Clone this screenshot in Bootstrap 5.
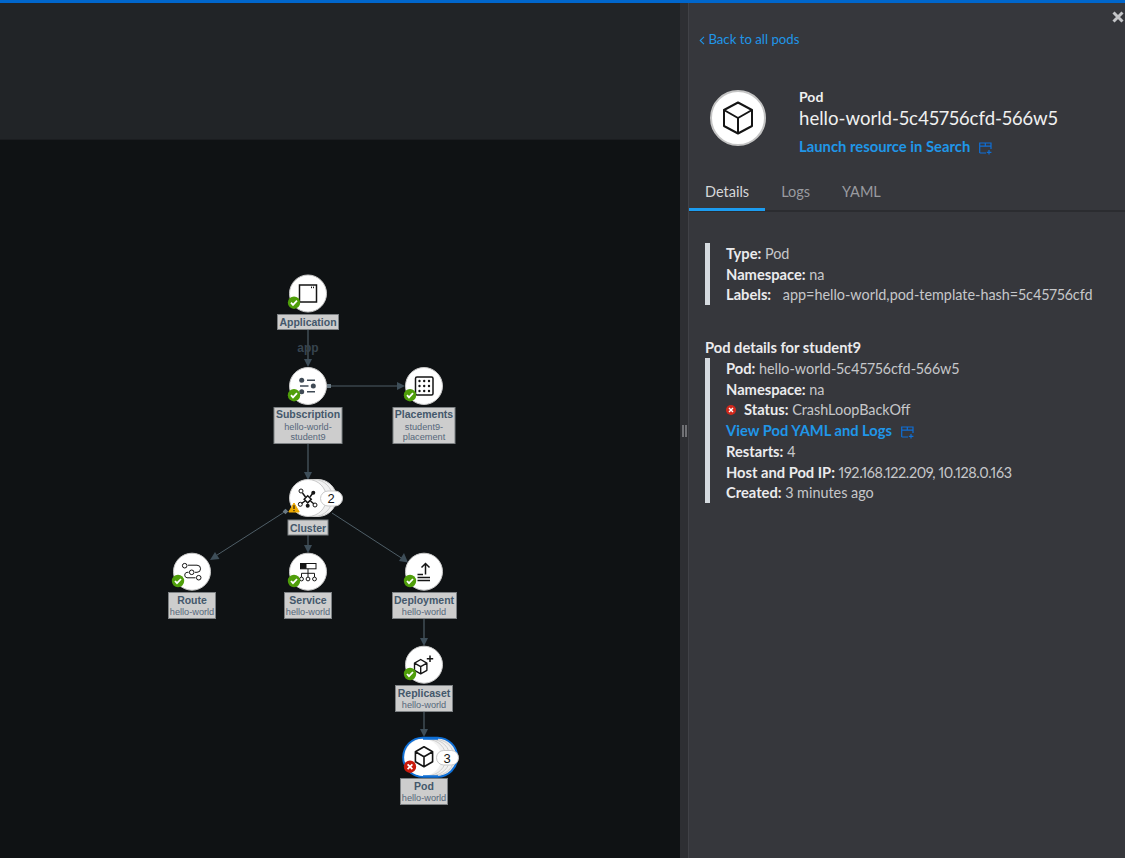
<!DOCTYPE html>
<html lang="en">
  <head>
    <meta charset="UTF-8" />
    <meta name="viewport" content="width=device-width, initial-scale=1.0" />
    <title>Pod details</title>
    <link href="https://cdn.jsdelivr.net/npm/bootstrap@5.3.3/dist/css/bootstrap.min.css" rel="stylesheet" />
    <style>
      html, body { height: 100%; }
      body {
        background-color: #0f1214;
        color: #e4e5e7;
        font-family: "Lato", sans-serif;
        font-size: 14px;
        font-variant-numeric: proportional-nums;
        overflow: hidden;
      }
      .top-strip { height: 3px; background-color: #0066cc; }
      .page-body { height: 855px; }
      .left-side { width: 680px; }
      .left-head { height: 137px; background-color: #212427; border-bottom: 1px solid #1b1d20; }
      .graph-svg { display: block; width: 680px; height: 718px; }
      .graph-svg text { font-family: "Liberation Sans", sans-serif; text-anchor: middle; }
      .lbl-title { font-size: 10.5px; font-weight: 700; fill: #44586b; }
      .lbl-sub { font-size: 9.2px; fill: #56677a; }
      .lbl-box { fill: #cdcdcd; stroke: #7d8184; stroke-width: 1; }
      .edge { stroke: #4c5b65; stroke-width: 1.2; fill: none; }
      .edge-thin { stroke: #566670; stroke-width: .9; fill: none; }
      .arrow { fill: #3e4e59; }
      .node-disc { fill: #fff; stroke: #c9c9c9; stroke-width: 1; }
      .stack-disc { fill: #f2f2f2; stroke: #cfcfcf; stroke-width: 1; }
      .ic-line { stroke: #151515; stroke-width: 1.5; fill: none; }
      .ic-thin { stroke: #151515; stroke-width: 1; fill: none; }
      .ic-soft { stroke: #3f4a55; stroke-width: 1.5; fill: none; }
      .count-txt { font-size: 13px; fill: #151515; }
      .side-panel { width: 445px; background-color: #36373c; }
      .side-grip {
        width: 9px;
        background-color: #2e2f33;
        border-right: 1px solid #414247;
      }
      .close-x { top: 7px; right: 0; width: 14px; height: 14px; }
      .side-link { color: #2096e8; text-decoration: none; }
      .back-row { padding: 27px 0 0 10px; line-height: 19px; font-size: 13.2px; }
      .pod-head { margin-top: 29px; padding-left: 21px; height: 100px; }
      .pod-disc { width: 56px; height: 56px; margin-top: 12px; margin-right: 33px; border-radius: 50%; background-color: #fff; border: 2px solid #c4c4c4; }
      .pod-kind { font-weight: 700; line-height: 19px; margin-top: 9px; color: #f0f0f0; }
      .pod-name { font-size: 18.6px; line-height: 24px; color: #f0f0f0; }
      .launch-row { font-weight: 700; font-size: 14.8px; margin-top: 6px; line-height: 20px; }
      .launch-ico { margin-left: 5px; }
      .tab-strip { height: 34px; border-bottom: 2px solid #2b2c30; font-size: 14.5px; }
      .tab-strip .nav-link {
        color: #9a9ba0;
        border: 0;
        padding: 0 16px;
        height: 33px;
        line-height: 28px;
        background: none;
        margin: 0;
        border-radius: 0;
      }
      .tab-strip .nav-link.active { color: #d6d7da; border-bottom: 3px solid #1c9cf0; background: none; }
      .info-block { margin: 31px 0 0 16px; padding-left: 16px; border-left: 5px solid #d5dadf; line-height: 20.7px; }
      .info-block > div { height: 20.7px; }
      .info-block b, .info-title { font-weight: 700; font-size: 14.7px; color: #ebebed; }
      .info-val { color: #c6c7ca; font-size: 14.4px; }
      .info-ips { letter-spacing: -.38px; }
      .info-title { margin: 32px 0 0 16px; line-height: 20px; }
      .info-title + .info-block { margin-top: 1px; }
      .link-strong { font-weight: 700; font-size: 14.7px; }
    </style>
  </head>
  <body>
    <div class="top-strip"></div>
    <div class="page-body d-flex">
      <div class="left-side d-flex flex-column">
        <div class="left-head"></div>
        <svg class="graph-svg" viewBox="0 140 680 718" xmlns="http://www.w3.org/2000/svg">
          <defs>
            <g id="okBadge">
              <circle r="6.2" fill="#4f9e0a" />
              <path d="M-3 0 L-1 2.2 L3 -2" stroke="#fff" stroke-width="1.8" fill="none" />
            </g>
            <g id="cube" stroke="#151515" fill="none" stroke-linejoin="round">
              <path d="M0 -10 L8.6 -5 V5 L0 10 L-8.6 5 V-5 Z M-8.6 -5 L0 0 L8.6 -5 M0 0 V10" />
            </g>
          </defs>

          <!-- edges -->
          <path class="edge" d="M308 330 V360 M308 443 V474 M308 534 V547 M424 618 V640 M424 711 V731" />
          <path class="edge-thin" d="M329 386 H400 M286 511 L214 557 M332 513 L403 559" />
          <rect x="327" y="384" width="4" height="4" fill="#6b7a84" />
          <rect x="283.5" y="509.5" width="4" height="4" fill="#6b7a84" transform="rotate(45 285.5 511.5)" />
          <path class="arrow" d="M308 367 L304 359 H312 Z M405 386 L397 382 V390 Z M308 480 L304 472 H312 Z M308 553 L304 545 H312 Z M424 646 L420 638 H428 Z M424 737 L420 729 H428 Z" />
          <path class="arrow" d="M210 560 L215 552 L219.5 559 Z M408 562.5 L399 561 L404 553 Z" />
          <text x="308" y="352" font-size="12" font-weight="700" fill="#37444f">app</text>

          <!-- Application -->
          <circle class="node-disc" cx="308" cy="293.5" r="18.5" />
          <rect class="ic-line" x="299.5" y="285" width="17" height="17" />
          <path d="M311.5 286.6 v1.6 M313.5 286.6 v1.6" stroke="#151515" stroke-width="1" />
          <use href="#okBadge" x="294" y="302.7" />
          <rect class="lbl-box" x="277.5" y="314.5" width="61" height="15" />
          <text class="lbl-title" x="308" y="326">Application</text>

          <!-- Subscription -->
          <circle class="node-disc" cx="308" cy="386" r="18.5" />
          <circle cx="301.7" cy="380.3" r="2.5" fill="#3f4a55" />
          <circle cx="313.3" cy="386" r="2.5" fill="#3f4a55" />
          <circle cx="301.7" cy="391.7" r="2.5" fill="#3f4a55" />
          <path class="ic-soft" d="M307 380.3 H315 M300 386 H308.5 M307 391.7 H315" />
          <use href="#okBadge" x="294" y="395.2" />
          <rect class="lbl-box" x="274" y="407.5" width="68" height="36" />
          <text class="lbl-title" x="308" y="418">Subscription</text>
          <text class="lbl-sub" x="308" y="429.5">hello-world-</text>
          <text class="lbl-sub" x="308" y="439.5">student9</text>

          <!-- Placements -->
          <circle class="node-disc" cx="424" cy="386" r="18.5" />
          <rect class="ic-line" x="415.5" y="377" width="17.5" height="18" rx="1.5" />
          <g fill="#151515">
            <circle cx="419.5" cy="381" r="1.2" /><circle cx="424.2" cy="381" r="1.2" /><circle cx="429" cy="381" r="1.2" />
            <circle cx="419.5" cy="386" r="1.2" /><circle cx="424.2" cy="386" r="1.2" /><circle cx="429" cy="386" r="1.2" />
            <circle cx="419.5" cy="391" r="1.2" /><circle cx="424.2" cy="391" r="1.2" /><circle cx="429" cy="391" r="1.2" />
          </g>
          <use href="#okBadge" x="410" y="395.2" />
          <rect class="lbl-box" x="393" y="407.5" width="62" height="36" />
          <text class="lbl-title" x="424" y="418">Placements</text>
          <text class="lbl-sub" x="424" y="429.5">student9-</text>
          <text class="lbl-sub" x="424" y="439.5">placement</text>

          <!-- Cluster -->
          <circle class="stack-disc" cx="318" cy="498" r="18.5" />
          <circle class="stack-disc" cx="314" cy="498" r="18.5" />
          <circle class="node-disc" cx="308" cy="498" r="18.5" />
          <path class="ic-line" d="M302.5 493 L305.5 497 M312.5 493.5 L310 497 M301.5 503.5 L305 501 M307.7 503 V502 M314 504 L310.5 501" />
          <rect class="ic-line" x="305.2" y="496.8" width="5" height="5" transform="rotate(45 307.7 499.3)" />
          <circle class="ic-thin" cx="301" cy="491" r="2" />
          <circle cx="313.3" cy="492.7" r="2" fill="#151515" />
          <circle class="ic-thin" cx="300.3" cy="504.3" r="2" />
          <circle cx="307.7" cy="505.7" r="2" fill="#151515" />
          <circle class="ic-thin" cx="315" cy="505" r="2" />
          <path d="M294 503 L299.2 512 H288.8 Z" fill="#f0ab00" stroke="#f0ab00" stroke-linejoin="round" />
          <path d="M294 505.3 V509 M294 510 V511.2" stroke="#151515" stroke-width="1.1" />
          <rect x="320.5" y="491" width="22" height="15" rx="7.5" fill="#fff" stroke="#c9c9c9" />
          <text class="count-txt" x="331" y="503">2</text>
          <rect class="lbl-box" x="288" y="520" width="40" height="15" />
          <text class="lbl-title" x="308" y="531.5">Cluster</text>

          <!-- Route -->
          <circle class="node-disc" cx="192" cy="571.7" r="18.5" />
          <circle class="ic-thin" cx="184.7" cy="565.7" r="2.3" />
          <circle class="ic-thin" cx="191.7" cy="572.3" r="2.3" />
          <circle class="ic-thin" cx="198.7" cy="577.7" r="2.3" />
          <path class="ic-thin" d="M188 565.2 H197 A3.5 3.5 0 0 1 197 572.3 H195 M188.5 572.3 H187 A2.8 2.8 0 0 0 187 577.8 H195.5" />
          <use href="#okBadge" x="178" y="581" />
          <rect class="lbl-box" x="168.5" y="592.5" width="47" height="26" />
          <text class="lbl-title" x="192" y="604">Route</text>
          <text class="lbl-sub" x="192" y="615">hello-world</text>

          <!-- Service -->
          <circle class="node-disc" cx="308" cy="571.7" r="18.5" />
          <rect class="ic-thin" x="300.5" y="563.5" width="15.5" height="5.3" />
          <rect x="300.5" y="563.5" width="6" height="5.3" fill="#151515" />
          <path class="ic-thin" d="M308 568.8 V577 M301.5 577 V573.3 H314.5 V577" />
          <circle class="ic-thin" cx="301.5" cy="579" r="1.9" />
          <circle class="ic-thin" cx="308" cy="579" r="1.9" />
          <circle class="ic-thin" cx="314.5" cy="579" r="1.9" />
          <use href="#okBadge" x="294" y="581" />
          <rect class="lbl-box" x="284.5" y="592.5" width="47" height="26" />
          <text class="lbl-title" x="308" y="604">Service</text>
          <text class="lbl-sub" x="308" y="615">hello-world</text>

          <!-- Deployment -->
          <circle class="node-disc" cx="424" cy="571.7" r="18.5" />
          <path class="ic-line" d="M425.5 563.5 V574.5 M421.5 567.5 L425.5 563.5 L429.5 567.5 M417.5 574.5 H423 M417.5 577.5 H430 M417.5 580.5 H430" />
          <use href="#okBadge" x="410" y="581" />
          <rect class="lbl-box" x="392.5" y="592.5" width="64" height="26" />
          <text class="lbl-title" x="424" y="604">Deployment</text>
          <text class="lbl-sub" x="424" y="615">hello-world</text>

          <!-- Replicaset -->
          <circle class="node-disc" cx="424" cy="664.7" r="18.5" />
          <use href="#cube" transform="translate(420.7 666.7) scale(.72)" stroke-width="1.9" />
          <path class="ic-line" d="M430 655.5 V662 M426.8 658.7 H433.2" />
          <use href="#okBadge" x="410" y="674" />
          <rect class="lbl-box" x="395.5" y="685.5" width="57" height="26" />
          <text class="lbl-title" x="424" y="697">Replicaset</text>
          <text class="lbl-sub" x="424" y="708">hello-world</text>

          <!-- Pod -->
          <rect x="403.2" y="737.7" width="54" height="39" rx="19.5" fill="#e9e9e9" stroke="#0f6fd6" stroke-width="2" />
          <circle class="stack-disc" cx="436" cy="757.5" r="18" />
          <circle class="stack-disc" cx="432" cy="757.5" r="18" />
          <circle class="stack-disc" cx="428" cy="757.5" r="18" />
          <circle cx="423" cy="757.5" r="18.5" fill="#fff" />
          <path d="M423 738.7 H438 M423 776.2 H438" stroke="#0f6fd6" stroke-width="2" />
          <use href="#cube" transform="translate(424 756.7)" stroke-width="1.6" />
          <circle cx="410" cy="766.7" r="6.2" fill="#c9190b" />
          <path d="M407.6 764.3 L412.4 769.1 M412.4 764.3 L407.6 769.1" stroke="#fff" stroke-width="1.7" />
          <rect x="436.5" y="750.5" width="22" height="14.5" rx="7.2" fill="#fff" stroke="#c9c9c9" />
          <text class="count-txt" x="447" y="762.5">3</text>
          <rect class="lbl-box" x="400.5" y="778.5" width="47" height="26" />
          <text class="lbl-title" x="424" y="790">Pod</text>
          <text class="lbl-sub" x="424" y="801">hello-world</text>
        </svg>
      </div>

      <div class="side-panel d-flex">
        <div class="side-grip d-flex align-items-center justify-content-center">
          <svg width="5" height="12" viewBox="0 0 5 12"><path d="M1 0 V12 M4 0 V12" stroke="#b3b4b8" stroke-width="1" /></svg>
        </div>
        <div class="flex-grow-1 position-relative">
          <svg class="close-x position-absolute" viewBox="0 0 14 14">
            <path d="M2.5 2.5 L11.5 11.5 M11.5 2.5 L2.5 11.5" stroke="#c4c5c8" stroke-width="3" />
          </svg>

          <div class="back-row">
            <a class="side-link" href="#">
              <svg width="6" height="9" viewBox="0 0 6 9"><path d="M5 .8 L1.2 4.5 L5 8.2" stroke="#2096e8" stroke-width="1.1" fill="none" /></svg>
              Back to all pods
            </a>
          </div>

          <div class="pod-head d-flex">
            <div class="pod-disc d-flex align-items-center justify-content-center flex-shrink-0">
              <svg width="32" height="34" viewBox="-16 -17 32 34">
                <path d="M0 -15.5 L14 -8 V8 L0 15.5 L-14 8 V-8 Z M-14 -8 L0 0 L14 -8 M0 0 V15.5" stroke="#151515" stroke-width="2" fill="none" stroke-linejoin="round" />
              </svg>
            </div>
            <div>
              <div class="pod-kind">Pod</div>
              <div class="pod-name">hello-world-5c45756cfd-566w5</div>
              <div class="launch-row">
                <a class="side-link" href="#">Launch resource in Search</a>
                <svg class="launch-ico" width="13" height="13" viewBox="0 0 13 13">
                  <path d="M.7 11 V1 H12 V7 M.7 4.2 H12 M6.3 1 V4.2 M.7 11 H7" stroke="#0f6fd6" stroke-width="1.2" fill="none" />
                  <path d="M10 8 V12.6 M7.8 10.3 H12.4" stroke="#0f6fd6" stroke-width="1.2" />
                </svg>
              </div>
            </div>
          </div>

          <ul class="nav nav-tabs tab-strip">
            <li class="nav-item"><a class="nav-link active" href="#">Details</a></li>
            <li class="nav-item"><a class="nav-link" href="#">Logs</a></li>
            <li class="nav-item"><a class="nav-link" href="#">YAML</a></li>
          </ul>

          <div class="info-block">
            <div><b>Type:</b> <span class="info-val">Pod</span></div>
            <div><b>Namespace:</b> <span class="info-val">na</span></div>
            <div><b>Labels:</b> <span class="info-val ms-2">app=hello-world,pod-template-hash=5c45756cfd</span></div>
          </div>

          <div class="info-title">Pod details for student9</div>
          <div class="info-block">
            <div><b>Pod:</b> <span class="info-val">hello-world-5c45756cfd-566w5</span></div>
            <div><b>Namespace:</b> <span class="info-val">na</span></div>
            <div class="d-flex align-items-center">
              <svg class="me-2" width="10" height="10" viewBox="0 0 10 10">
                <circle cx="5" cy="5" r="5" fill="#d0281c" />
                <path d="M3 3 L7 7 M7 3 L3 7" stroke="#fff" stroke-width="1.4" />
              </svg>
              <span><b>Status:</b> <span class="info-val">CrashLoopBackOff</span></span>
            </div>
            <div class="link-strong">
              <a class="side-link" href="#">View Pod YAML and Logs</a>
              <svg class="launch-ico" width="13" height="13" viewBox="0 0 13 13">
                <path d="M.7 11 V1 H12 V7 M.7 4.2 H12 M6.3 1 V4.2 M.7 11 H7" stroke="#0f6fd6" stroke-width="1.2" fill="none" />
                <path d="M10 8 V12.6 M7.8 10.3 H12.4" stroke="#0f6fd6" stroke-width="1.2" />
              </svg>
            </div>
            <div><b>Restarts:</b> <span class="info-val">4</span></div>
            <div><b>Host and Pod IP:</b> <span class="info-val info-ips">192.168.122.209, 10.128.0.163</span></div>
            <div><b>Created:</b> <span class="info-val">3 minutes ago</span></div>
          </div>
        </div>
      </div>
    </div>
    <script src="https://cdn.jsdelivr.net/npm/bootstrap@5.3.3/dist/js/bootstrap.bundle.min.js"></script>
  </body>
</html>
